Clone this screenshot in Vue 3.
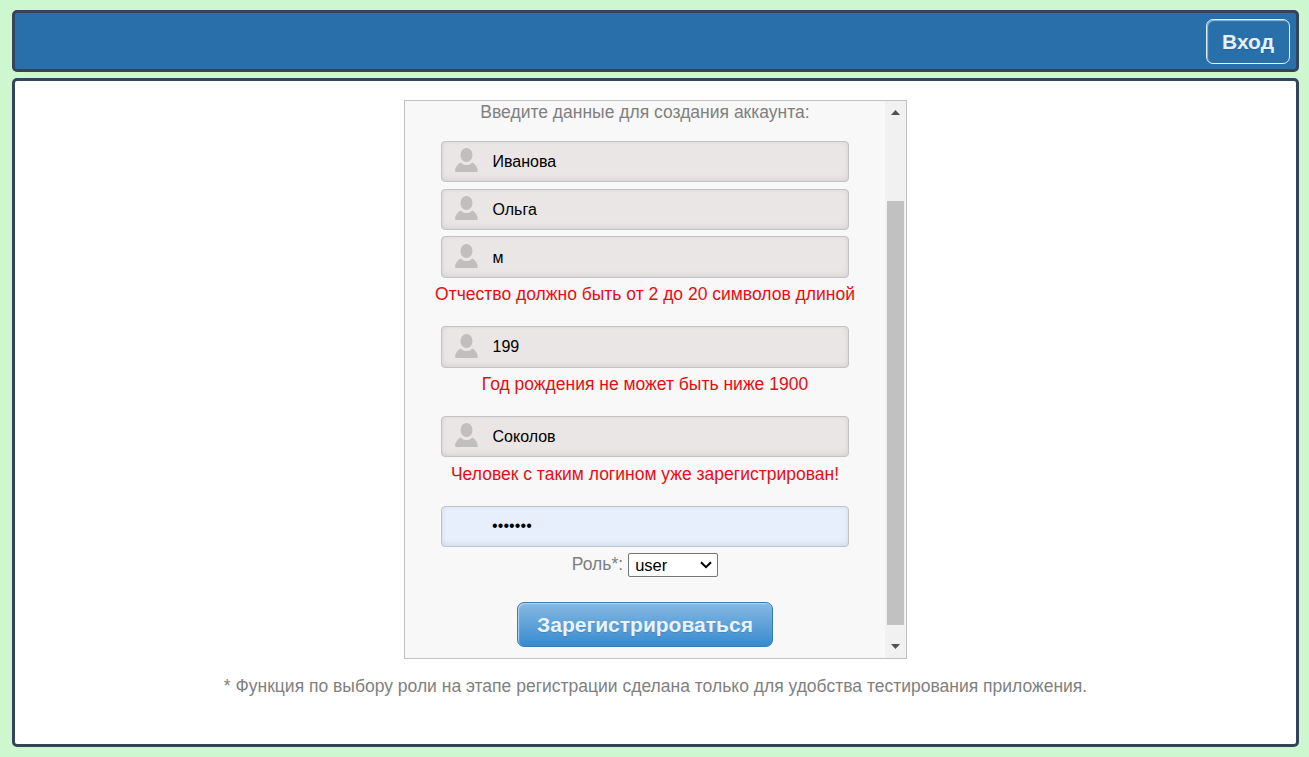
<script setup>
const fields = [
  { id: 'surname', value: 'Иванова', height: 41, gap: 7 },
  { id: 'name', value: 'Ольга', height: 41, gap: 6 },
  { id: 'patronymic', value: 'м', height: 42, low: true, error: 'Отчество должно быть от 2 до 20 символов длиной' },
  { id: 'year', value: '199', height: 42, error: 'Год рождения не может быть ниже 1900' },
  { id: 'login', value: 'Соколов', height: 41, tall: true, error: 'Человек с таким логином уже зарегистрирован!' },
  { id: 'password', value: '•••••••', height: 41, filled: true },
]
</script>

<template>
  <div class="page">
    <header class="bar">
      <button class="login">Вход</button>
    </header>
    <main class="panel">
      <section class="card">
        <form class="form" @submit.prevent>
          <p class="title">Введите данные для создания аккаунта:</p>
          <template v-for="f in fields" :key="f.id">
            <div class="field" :class="{ filled: f.filled, low: f.low, year: f.id === 'year' }" :style="{ height: f.height + 'px', marginBottom: (f.gap || 0) + 'px' }">
              <svg v-if="!f.filled" class="person" viewBox="0 0 24 25">
                <ellipse cx="12.5" cy="7" rx="6" ry="7" />
                <path d="M6.7 14.4C8.3 16.2 10.2 17 12.5 17S16.7 16.2 18.3 14.4C20.8 15.2 23.8 19.6 23.8 22.8Q23.8 24 22.7 24H2.2Q1.1 24 1.1 22.8C1.1 19.6 4.2 15.2 6.7 14.4Z" />
              </svg>
              <span class="value" :class="{ dots: f.filled }">{{ f.value }}</span>
            </div>
            <p v-if="f.error" class="error" :class="{ tall: f.tall }">{{ f.error }}</p>
          </template>
          <div class="role">
            <span class="role-label">Роль*:</span>
            <div class="select">
              <span>user</span>
              <svg class="chevron" viewBox="0 0 12 8"><path d="M1 1.2L6 6.2L11 1.2" /></svg>
            </div>
          </div>
          <button class="submit">Зарегистрироваться</button>
        </form>
        <div class="scrollbar">
          <svg class="arrow" viewBox="0 0 9 5"><path d="M0 5L4.5 0L9 5Z" /></svg>
          <div class="thumb"></div>
          <svg class="arrow" viewBox="0 0 9 5"><path d="M0 0H9L4.5 5Z" /></svg>
        </div>
      </section>
      <p class="note">* Функция по выбору роли на этапе регистрации сделана только для удобства тестирования приложения.</p>
    </main>
  </div>
</template>

<style>
body { background: #cdf7cf; }
</style>

<style scoped>
.page {
  box-sizing: border-box;
  height: 757px;
  padding: 10px 10px 10px 12px;
  display: flex;
  flex-direction: column;
  gap: 6px;
  background: #cdf7cf;
  font-family: "Liberation Sans", Arial, sans-serif;
  font-size: 17.5px;
  color: #7f7f7f;
}
.page * { box-sizing: border-box; }
p { margin: 0; white-space: nowrap; }
button { font-family: inherit; font-weight: bold; padding: 0; white-space: nowrap; }
.bar {
  height: 62px;
  flex: none;
  border: 3px solid #34445a;
  border-radius: 5px;
  background: #2970aa;
  display: flex;
  justify-content: flex-end;
  padding: 6px 6px 0 0;
}
.login {
  width: 84px;
  height: 45px;
  border: 1px solid #e4f1fc;
  border-radius: 7px;
  background: transparent;
  box-shadow: inset 1px 1px 1px rgba(180, 215, 245, 0.7);
  color: #e4f0fc;
  font-size: 21px;
  text-shadow: 0 1px 1px rgba(0, 0, 0, 0.12);
}
.panel {
  height: 669px;
  flex: none;
  border: 3px solid #34445a;
  border-radius: 5px;
  background: #fff;
  padding-top: 19px;
  display: flex;
  flex-direction: column;
  align-items: center;
}
.card {
  width: 503px;
  height: 559px;
  flex: none;
  border: 1px solid #c1c1c3;
  background: #f8f8f8;
  display: flex;
}
.form {
  width: 480px;
  display: flex;
  flex-direction: column;
  align-items: center;
}
.title { height: 40px; line-height: 22px; flex: none; }
.field {
  width: 408px;
  flex: none;
  border: 1px solid #c2c3c6;
  border-radius: 4px;
  background: #e9e6e5;
  box-shadow: inset 0 0 4px rgba(0, 0, 0, 0.05), inset 0 -3px 6px rgba(0, 0, 0, 0.05);
  display: flex;
  align-items: center;
  padding-left: 12px;
  color: #000;
  font-size: 16px;
}
.field.filled { background: #e7effd; padding-left: 50px; }
.field.low { padding-top: 2px; }
.field.year .person { margin-bottom: 1px; }
.person { width: 24px; height: 25px; fill: #c0bfbe; margin: 0 14.5px 3px 0; }
.value { line-height: 20px; }
.dots { font-size: 16px; letter-spacing: 0.1px; padding-bottom: 2px; }
.error { height: 48px; line-height: 32px; color: #e60d13; flex: none; }
.error.tall { height: 49px; line-height: 34px; }
.role { display: flex; height: 24px; margin-top: 6px; flex: none; }
.role-label { line-height: 22px; margin-right: 5px; }
.select {
  width: 90px;
  height: 24px;
  border: 1px solid #767676;
  border-radius: 2px;
  background: #fff;
  color: #000;
  font-size: 16.5px;
  line-height: 22px;
  display: flex;
  align-items: center;
  justify-content: space-between;
  padding: 0 5px 0 6px;
}
.chevron { width: 12px; height: 8px; fill: none; stroke: #000; stroke-width: 2; }
.submit {
  width: 256px;
  height: 45px;
  flex: none;
  margin-top: 25px;
  border: 1px solid #387db5;
  border-radius: 7px;
  background: linear-gradient(#86b9e2, #378bcf);
  box-shadow: inset 1px 1px 1px #b5d5ef;
  color: #e9f3fd;
  font-size: 21px;
  text-shadow: 0 1px 1px rgba(0, 0, 0, 0.12);
}
.scrollbar {
  width: 21px;
  background: #f1f1f1;
  display: flex;
  flex-direction: column;
  align-items: center;
  padding: 9px 0 9px;
}
.arrow { width: 9px; height: 5px; flex: none; fill: #505050; }
.thumb { width: 17px; height: 424px; margin: 86px 2px auto; background: #c1c1c1; flex: none; }
.note { line-height: 22px; margin-top: 16px; }
</style>
